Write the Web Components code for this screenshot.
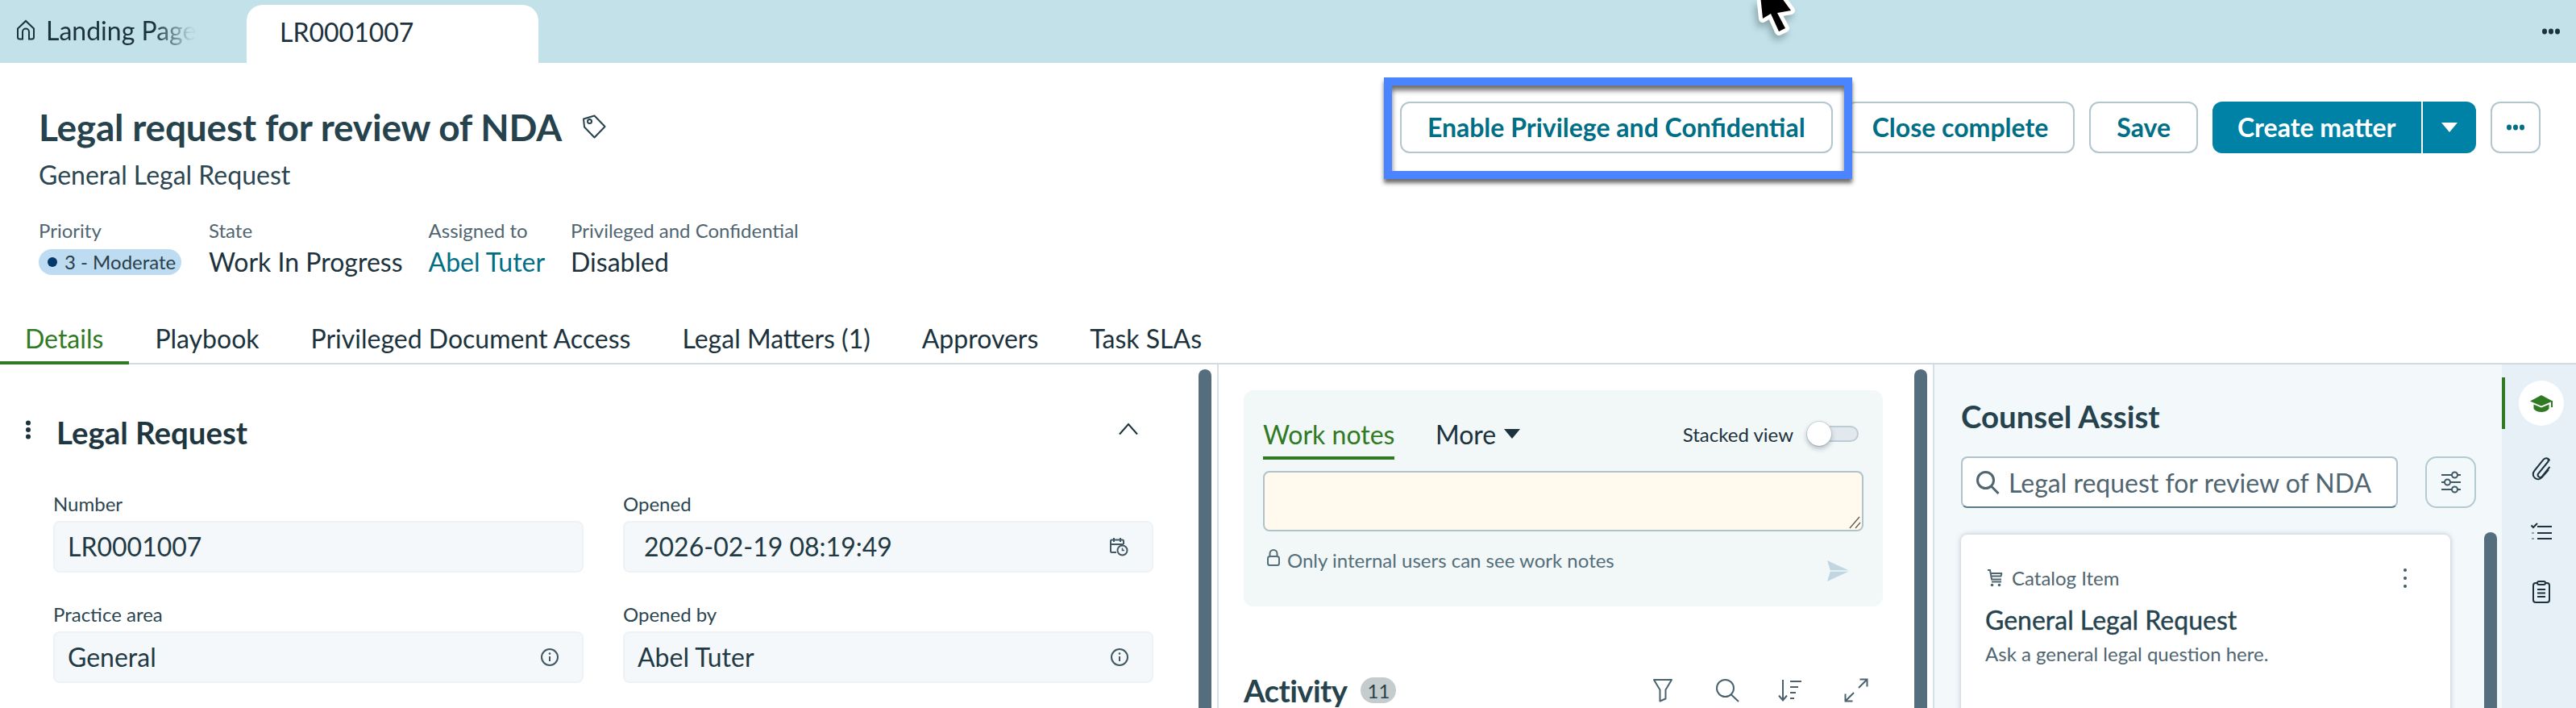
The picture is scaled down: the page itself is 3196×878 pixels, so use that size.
<!DOCTYPE html>
<html lang="en"><head><meta charset="utf-8"><title>LR0001007</title>
<style>html,body{margin:0;padding:0;background:#fff;overflow:hidden}body{font-family:Lato,"Liberation Sans",sans-serif}</style>
</head><body>
<x-app>
  <x-tabbar></x-tabbar>
  <x-record></x-record>
  <x-tabs>
    <x-tab active first>Details</x-tab><x-tab>Playbook</x-tab><x-tab>Privileged Document Access</x-tab><x-tab>Legal Matters (1)</x-tab><x-tab>Approvers</x-tab><x-tab>Task SLAs</x-tab>
  </x-tabs>
  <x-workspace>
    <x-form-pane></x-form-pane>
    <x-activity-pane></x-activity-pane>
    <x-assist-pane></x-assist-pane>
    <x-rail></x-rail>
  </x-workspace>
</x-app>
<script>
const ICONS = {
  home:[24,26,'<path d="M2 11.5 12 2l10 9.500V22a2.500 2.500 0 0 1-2.500 2.500H16V15.500a4 4 0 0 0-8 0v9H4.500A2.500 2.500 0 0 1 2 22z" fill="none" stroke="currentColor" stroke-width="2"/>'],
  tag:[30,30,'<path d="M2 5.500 15.500 1.500 28.500 15 15.500 28.500 3 15.500z" fill="none" stroke="currentColor" stroke-width="2" stroke-linejoin="round"/><circle cx="9.500" cy="8.500" r="2.500" fill="none" stroke="currentColor" stroke-width="2"/>'],
  dotsh:[24,8,'<ellipse cx="4" cy="4" rx="3" ry="3.400" fill="currentColor"/><ellipse cx="12" cy="4" rx="3" ry="3.400" fill="currentColor"/><ellipse cx="20" cy="4" rx="3" ry="3.400" fill="currentColor"/>'],
  kebab:[8,24,'<circle cx="4" cy="3.500" r="3" fill="currentColor"/><circle cx="4" cy="12" r="3" fill="currentColor"/><circle cx="4" cy="20.500" r="3" fill="currentColor"/>'],
  kebabs:[6,26,'<circle cx="3" cy="3" r="2" fill="currentColor"/><circle cx="3" cy="13" r="2" fill="currentColor"/><circle cx="3" cy="23" r="2" fill="currentColor"/>'],
  chevup:[24,16,'<path d="M1 14.500 12 2l11 12.500" fill="none" stroke="currentColor" stroke-width="2"/>'],
  info:[22,22,'<circle cx="11" cy="11" r="10" fill="none" stroke="currentColor" stroke-width="2"/><path d="M11 10v6" stroke="currentColor" stroke-width="2"/><circle cx="11" cy="6.500" r="1.300" fill="currentColor"/>'],
  calclock:[24,24,'<path d="M9 19H3.500A1.500 1.500 0 0 1 2 17.500V5a1.500 1.500 0 0 1 1.500-1.500h13A1.500 1.500 0 0 1 18 5v4M6 1v5M14 1v5M2 9h16" fill="none" stroke="currentColor" stroke-width="2"/><circle cx="16.500" cy="16.500" r="6" fill="none" stroke="currentColor" stroke-width="2"/><path d="M16.500 13.500v3h2.500" fill="none" stroke="currentColor" stroke-width="1.600"/>'],
  lock:[18,22,'<rect x="2" y="10" width="14" height="11" rx="2.500" fill="none" stroke="currentColor" stroke-width="2"/><path d="M4.500 10V6.500a4.500 4.500 0 0 1 9 0V10" fill="none" stroke="currentColor" stroke-width="2"/>'],
  send:[30,28,'<path d="M1 1 29 14 1 27 5 14z" fill="currentColor"/><path d="M5 14h24" stroke="#f2f7f8" stroke-width="1.500"/>'],
  funnel:[26,30,'<path d="M2 2h22L16.500 14.500V25.500l-7 3V14.500z" fill="none" stroke="currentColor" stroke-width="2" stroke-linejoin="round"/>'],
  search:[30,30,'<circle cx="12.500" cy="12.500" r="10.500" fill="none" stroke="currentColor" stroke-width="2"/><path d="M20 20.500 29 29" stroke="currentColor" stroke-width="2"/>'],
  searchb:[30,30,'<circle cx="12.500" cy="12.500" r="10" fill="none" stroke="currentColor" stroke-width="3"/><path d="M20 20.500 28.500 29" stroke="currentColor" stroke-width="3"/>'],
  sort:[30,28,'<path d="M6 1v25M1 20.500l5 6 5-6" fill="none" stroke="currentColor" stroke-width="2"/><path d="M15 3h14M15 10h10M15 17h7M15 24h5" stroke="currentColor" stroke-width="2"/>'],
  expand:[30,30,'<path d="M18 12 28.500 1.500M19.500 1.500h9v9M12 18 1.500 28.500M1.500 19.500v9h9" fill="none" stroke="currentColor" stroke-width="2"/>'],
  sliders:[26,28,'<path d="M1 5h14M20 5h5M1 14h5M11 14h14M1 23h14M20 23h5" stroke="currentColor" stroke-width="2"/><circle cx="17.500" cy="5" r="3.500" fill="none" stroke="currentColor" stroke-width="2"/><circle cx="8.500" cy="14" r="3.500" fill="none" stroke="currentColor" stroke-width="2"/><circle cx="17.500" cy="23" r="3.500" fill="none" stroke="currentColor" stroke-width="2"/>'],
  cart:[20,22,'<path d="M1 1h3l2 11.500h12M5 5h14M5.500 8.500h12l1-3.500M6 15.500h12" fill="none" stroke="currentColor" stroke-width="2"/><circle cx="6.500" cy="19.500" r="1.800" fill="currentColor"/><circle cx="15.500" cy="19.500" r="1.800" fill="currentColor"/>'],
  cap:[28,22,'<path d="M14 1 28 8.500 14 14.500 0 8.500z" fill="currentColor"/><path d="M4.500 12.500 14 16.500l9.500-4V18c-2 2.500-5.500 4-9.500 4s-7.500-1.500-9.500-4z" fill="currentColor"/><path d="M27 8v8" stroke="currentColor" stroke-width="2"/>'],
  clip:[24,30,'<path d="M20 7 8 21.500a3 3 0 0 0 4.500 3.800L22 13.500M22 4.500c-1.800-2.800-5-3-7.200-.8L3.600 17.500c-2.800 3.200-2.200 7.200.4 9.300 2.800 2.300 6.500 1.700 8.800-1L20.500 17M20 7c1-1 1.500-2 0-4" fill="none" stroke="currentColor" stroke-width="2" stroke-linecap="round"/>'],
  checklist:[26,22,'<path d="M0.500 3.500 3 6 8 1" fill="none" stroke="currentColor" stroke-width="2"/><path d="M8 5h18M8 13h18M8 20h18" stroke="currentColor" stroke-width="2.200"/><path d="M1 13h3M1 20h3" stroke="#8fa3ad" stroke-width="2.200"/>'],
  clipboard:[22,28,'<rect x="1" y="3" width="20" height="24" rx="3" fill="none" stroke="currentColor" stroke-width="2"/><rect x="6" y="1" width="10" height="4" rx="2" fill="#e6f0f6" stroke="currentColor" stroke-width="2"/><path d="M6 11h10M6 15.500h10M6 20h10" stroke="currentColor" stroke-width="2"/>'],
};
function svg(n,color){const [w,h,b]=ICONS[n];return `<svg xmlns="http://www.w3.org/2000/svg" width="${w}" height="${h}" viewBox="0 0 ${w} ${h}" style="display:block;flex:none;color:${color||'currentColor'}">${b}</svg>`}
function def(name,css,html){customElements.define(name,class extends HTMLElement{constructor(){super();this.attachShadow({mode:'open'}).innerHTML=`<style>${css}</style>${typeof html==='function'?html(this):html}`}})}

def('x-app',`:host{display:flex;flex-direction:column;position:relative;width:3196px;height:878px;overflow:hidden;background:#fff;font-family:Lato,"Liberation Sans",sans-serif;color:#1c323c}
.cursor{position:absolute;left:2160px;top:0;filter:drop-shadow(-3px 6px 4px rgba(40,60,70,.35))}`,
`<slot></slot><svg class="cursor" width="90" height="60" viewBox="0 0 90 60"><path d="M24-6 27 23 37 17 47 39 55 35 45 16 62 13 48-6z" fill="#000" stroke="#fff" stroke-width="10" stroke-linejoin="round" paint-order="stroke"/></svg>`);

def('x-tabbar',`:host{display:flex;flex:none;height:78px;background:#c3e1e8;align-items:stretch;font-size:32px;color:#1c323c}
.home{width:306px;box-sizing:border-box;padding:0 0 4px 20px;display:flex;align-items:center;gap:13px;color:#1c323c}
.home span{display:block;white-space:nowrap;-webkit-mask-image:linear-gradient(90deg,#000 72%,rgba(0,0,0,.05) 97%);mask-image:linear-gradient(90deg,#000 72%,rgba(0,0,0,.05) 97%)}
.tab{margin-top:6px;width:362px;box-sizing:border-box;padding:0 0 6px 41px;background:#fff;border-radius:20px 20px 0 0;display:flex;align-items:center}
.end{margin-left:auto;padding:0 19px 0 0;display:flex;align-items:center}`,
`<div class="home">${svg('home')}<span>Landing Page</span></div><div class="tab">LR0001007</div><div class="end">${svg('dotsh')}</div>`);

def('x-meta',`:host{display:flex;flex-direction:column;font-size:32px;color:#1c323c;white-space:nowrap}
.l{font-size:24px;line-height:30px;color:#4f6570;margin-bottom:4px}.v{line-height:40px;height:40px;display:flex;align-items:center}`,
h=>`<div class="l">${h.getAttribute('label')}</div><div class="v"><slot></slot></div>`);

def('x-badge',`:host{display:inline-flex;align-items:center;height:32px;width:177px;box-sizing:border-box;padding-left:11px;gap:9px;background:#bddcf2;border-radius:16px;font-size:24px;color:#2a3f49;white-space:nowrap}
i{width:12px;height:12px;border-radius:50%;background:#03396b;flex:none}`,`<i></i><slot></slot>`);

def('x-btn',`:host{display:inline-flex;align-items:center;justify-content:center;box-sizing:border-box;height:64px;padding:0 32px 2px;border:2px solid #b3c5cd;border-radius:12px;background:#fff;color:#006f86;font-size:32px;font-weight:700;white-space:nowrap}
:host([icon]){padding:0;width:62px}
:host([tight]){padding:0 31px 2px}`,`<slot></slot>`);

def('x-split',`:host{display:flex;height:64px;background:#0081a6;color:#fff;border-radius:12px;font-size:32px;font-weight:700;white-space:nowrap}
.a{display:flex;align-items:center;width:261px;box-sizing:border-box;padding:0 0 2px 31px;border-right:2px solid #fff}
.b{display:flex;align-items:center;justify-content:center;width:66px}
.t{width:0;height:0;border-left:10px solid transparent;border-right:10px solid transparent;border-top:12px solid #fff}`,
`<div class="a"><slot></slot></div><div class="b"><div class="t"></div></div>`);

def('x-highlight',`:host{position:absolute;left:-20px;top:-30px;width:581px;height:126px;box-sizing:border-box;border:10px solid #4a84ff;box-shadow:0 5px 5px rgba(30,30,30,.65),inset 0 6px 6px rgba(30,30,30,.65);pointer-events:none}`,``);

def('x-toolbar',`:host{display:flex;position:relative;gap:18px;flex:none;margin-top:48px;margin-right:44px;align-self:flex-start}
.d{color:#006f86}
.e{margin-right:-2px}`,
`<x-btn class="e">Enable Privilege and Confidential</x-btn><x-btn tight>Close complete</x-btn><x-btn>Save</x-btn><x-split>Create matter</x-split><x-btn icon><span class="d">${svg('dotsh')}</span></x-btn><x-highlight></x-highlight>`);

def('x-record',`:host{display:flex;flex:none;height:322px;box-sizing:border-box;justify-content:space-between}
.l{padding:52px 0 0 48px}
h1{margin:0;font-size:46px;letter-spacing:-.2px;line-height:56px;font-weight:700;color:#26434d;display:flex;align-items:center;gap:25px;white-space:nowrap}
h1 svg{color:#4f6570;margin-top:-2px}
.sub{font-size:32px;line-height:40px;color:#2b4650;margin-top:11px}
.m{display:flex;gap:32px;margin-top:34px}
.m x-meta:first-child{margin-right:2px}
a{color:#006f86;text-decoration:none}`,
`<div class="l"><h1>Legal request for review of NDA ${svg('tag')}</h1><div class="sub">General Legal Request</div>
<div class="m"><x-meta label="Priority"><x-badge>3 - Moderate</x-badge></x-meta><x-meta label="State">Work In Progress</x-meta><x-meta label="Assigned to"><a>Abel Tuter</a></x-meta><x-meta label="Privileged and Confidential">Disabled</x-meta></div></div><x-toolbar></x-toolbar>`);

def('x-tabs',`:host{display:flex;flex:none;height:52px;box-sizing:border-box;border-bottom:2px solid #d0dce2;width:100%}`,`<slot></slot>`);
def('x-tab',`:host{display:block;box-sizing:border-box;height:52px;padding:0 32px;font-size:32px;line-height:40px;color:#1c323c;white-space:nowrap}
:host([first]){padding-left:31px}
:host([active]){color:#2f7a22;border-bottom:4px solid #2f7a22}`,`<slot></slot>`);

def('x-workspace',`:host{display:flex;flex:1;min-height:0}`,`<slot></slot>`);

def('x-sb',`:host{display:block;flex:none;width:16px;background:#546e7e;border-radius:8px 8px 0 0}`,``);

def('x-field',`:host{display:block}
.l{font-size:24px;line-height:32px;height:32px;color:#2b4650;margin-bottom:5px}
.b{display:flex;align-items:center;justify-content:space-between;box-sizing:border-box;height:64px;background:#f5f8fa;border:2px solid #eef2f5;border-radius:8px;padding:0 29px 2px 16px;font-size:32px;color:#1f3a44;white-space:nowrap}
.c{color:#3f5863;margin-bottom:-2px}`,
h=>{const i=h.getAttribute('icon');return `<div class="l">${h.getAttribute('label')}</div><div class="b" style="padding-left:${h.getAttribute('pad')||16}px"><span><slot></slot></span><span class="c">${i?svg(i):''}</span></div>`});

def('x-form-pane',`:host{display:flex;flex:none;width:1512px;box-sizing:border-box;border-right:2px solid #d7e0e5}
.c{width:1487px;flex:none;box-sizing:border-box}
.h{display:flex;align-items:center;height:60px;margin-top:54px;padding:0 75px 0 31px}
.h h2{margin:0 0 0 31px;font-size:38.4px;font-weight:700;color:#1e3640;white-space:nowrap}
.ch{margin-left:auto;color:#1c323c;margin-top:-8px}
.k{color:#1c323c;margin-top:-6px}
.g{display:grid;grid-template-columns:658px 658px;column-gap:49px;row-gap:36px;padding-left:66px;margin-top:43px}
x-sb{margin-top:6px}`,
`<div class="c"><div class="h"><span class="k">${svg('kebab')}</span><h2>Legal Request</h2><span class="ch">${svg('chevup')}</span></div>
<div class="g"><x-field label="Number">LR0001007</x-field><x-field label="Opened" icon="calclock" pad="24">2026-02-19 08:19:49</x-field><x-field label="Practice area" icon="info">General</x-field><x-field label="Opened by" icon="info">Abel Tuter</x-field></div></div><x-sb></x-sb>`);

def('x-toggle',`:host{display:block;position:relative;width:64px;height:20px;box-sizing:border-box;background:#e1e9ee;border:2px solid #bdccd4;border-radius:10px}
i{position:absolute;left:-2px;top:-7px;width:30px;height:30px;border-radius:50%;background:#fff;box-shadow:0 3px 6px rgba(60,80,90,.4),0 0 0 1px #cfdae0}`,`<i></i>`);

def('x-notes',`:host{display:block;box-sizing:border-box;width:793px;height:268px;background:#f2f7f8;border-radius:12px;padding:24px 24px 0}
.t{display:flex;align-items:flex-start;height:62px;font-size:32px;white-space:nowrap}
.w{color:#2f7a22;height:62px;box-sizing:border-box;line-height:62px;border-bottom:4px solid #2f7a22;margin-right:51px;width:163px}
.m{line-height:62px;color:#1c323c;display:flex;align-items:center;gap:10px}
.m i{width:0;height:0;border-left:10px solid transparent;border-right:10px solid transparent;border-top:12px solid #1c323c;margin-top:-2px}
.s{margin-left:auto;display:flex;align-items:center;gap:17px;height:60px;font-size:24px;color:#1c323c;margin-right:6px}
.a{position:relative;box-sizing:border-box;width:745px;height:75px;margin-top:14px;background:#fffaed;border:2px solid #b0c2ca;border-radius:8px}
.a svg{position:absolute;right:1px;bottom:1px}
.f{display:flex;align-items:flex-start;gap:8px;margin-top:20px;padding-left:4px;font-size:24px;line-height:32px;color:#546e7a;position:relative;white-space:nowrap}
.f>svg{margin-top:1px}
.f .snd{position:absolute;left:699px;top:15px;color:#c0d6e0}`,
`<div class="t"><div class="w">Work notes</div><div class="m">More <i></i></div><div class="s">Stacked view <x-toggle></x-toggle></div></div>
<div class="a"><svg width="16" height="16" viewBox="0 0 16 16"><path d="M14 1 2 15M15 8 9 15" stroke="#5a5a52" stroke-width="1.300" fill="none"/></svg></div>
<div class="f">${svg('lock','#546e7a')}<span>Only internal users can see work notes</span><span class="snd">${svg('send')}</span></div>`);

def('x-activity-pane',`:host{display:flex;flex:none;width:888px;box-sizing:border-box;border-right:2px solid #d7e0e5}
.c{width:863px;flex:none;box-sizing:border-box;padding:32px 0 0 31px;overflow:hidden}
.h{display:flex;align-items:center;height:48px;margin-top:80px;color:#4a626d}
h2{margin:0;font-size:38.4px;letter-spacing:-.6px;font-weight:700;color:#26434d;line-height:48px}
.n{display:flex;align-items:center;justify-content:center;width:44px;height:32px;border-radius:16px;background:#c5cccd;color:#2a3f49;font-size:24px;margin-left:17px}
.i{display:flex;align-items:center;margin-left:auto;margin-right:57px}
.i svg{margin-left:52px}
.i svg:nth-child(3){margin-left:48px}
.i svg:first-child{margin:0}
x-sb{margin-top:6px;margin-right:8px}`,
`<div class="c"><x-notes></x-notes><div class="h"><h2>Activity</h2><span class="n">11</span><div class="i">${svg('funnel')}${svg('search')}${svg('sort')}${svg('expand')}</div></div></div><x-sb></x-sb><span></span>`);

def('x-assist-pane',`:host{display:flex;flex-direction:column;flex:none;width:704px;box-sizing:border-box;background:#f3f8fb;padding:0 0 0 33px;overflow:hidden}
h2{margin:40px 0 0;font-size:38.400px;line-height:48px;font-weight:700;color:#26434d;white-space:nowrap}
.r{display:flex;gap:34px;margin-top:26px}
.s{display:flex;align-items:center;gap:11px;box-sizing:border-box;width:542px;height:64px;background:#fff;border:2px solid #b0c2ca;border-bottom-color:#5a7a88;border-radius:8px;padding:0 0 0 16px;font-size:32px;color:#4f6570;white-space:nowrap}
.s svg{color:#1c323c}
.b{display:flex;align-items:center;justify-content:center;box-sizing:border-box;width:63px;height:64px;border:2px solid #b5c9d2;border-radius:14px;color:#3f5863}
.w{display:flex;margin-top:30px;flex:1;min-height:0}
.c{box-sizing:border-box;width:607px;margin-top:3px;background:#fff;border-radius:8px 8px 0 0;box-shadow:0 0 6px rgba(80,110,125,.4);padding:38px 30px 0;height:240px;flex:none}
.t{display:flex;align-items:center;font-size:24px;line-height:32px;color:#4f6570;padding-left:2px;gap:11px}
.t .k{margin-left:auto;margin-right:23px;color:#3f5863}
.n{font-size:32px;line-height:40px;font-weight:400;color:#26434d;margin-top:16px;-webkit-text-stroke:.4px #26434d}
.d{font-size:24px;line-height:32px;color:#4f6570;margin-top:6px}
x-sb{margin-left:42px}`,
`<h2>Counsel Assist</h2><div class="r"><div class="s">${svg('searchb')}<span>Legal request for review of NDA</span></div><div class="b">${svg('sliders')}</div></div>
<div class="w"><div class="c"><div class="t">${svg('cart')}<span>Catalog Item</span><span class="k">${svg('kebabs')}</span></div><div class="n">General Legal Request</div><div class="d">Ask a general legal question here.</div></div><x-sb></x-sb></div>`);

def('x-rail',`:host{display:flex;flex-direction:column;align-items:center;flex:none;width:92px;box-sizing:border-box;background:#e6f0f6;position:relative;color:#1c323c;padding-left:6px;padding-top:20px}
.bar{position:absolute;left:0;top:16px;width:4px;height:64px;background:#2f7a22}
.o{width:56px;height:56px;border-radius:50%;background:#fff;display:flex;align-items:center;justify-content:center;color:#2f7a22}
.p{margin-top:38px}.q{margin-top:52px}.z{margin-top:50px}`,
`<div class="bar"></div><div class="o">${svg('cap')}</div><div class="p">${svg('clip')}</div><div class="q">${svg('checklist')}</div><div class="z">${svg('clipboard')}</div>`);
</script>
</body></html>
